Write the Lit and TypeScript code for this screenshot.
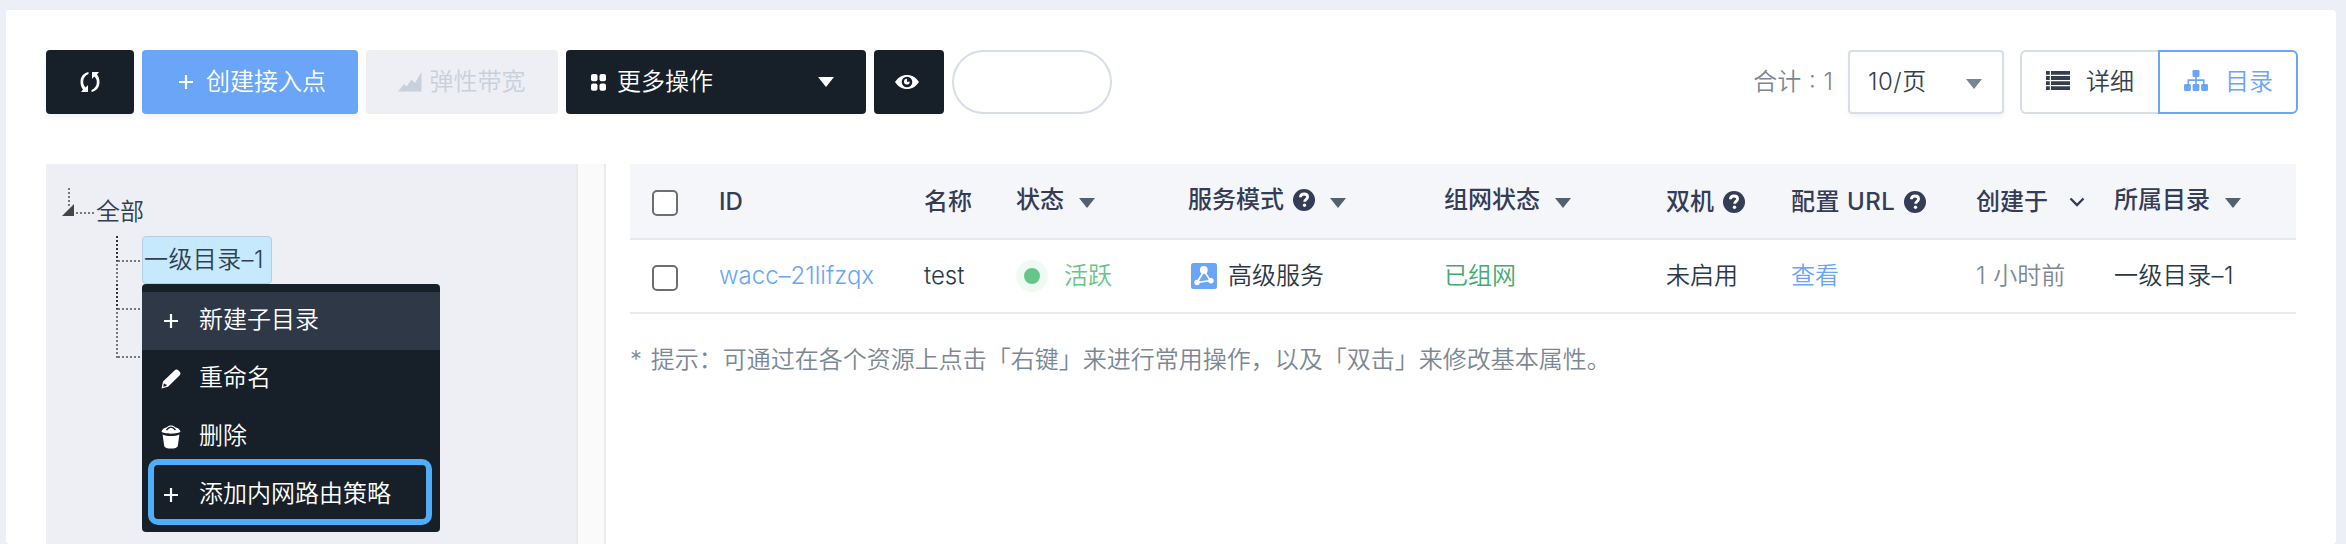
import { LitElement, html, svg, css } from "lit";
import { customElement, property } from "lit/decorators.js";

const GLYPHS: Record<string, { w: number; h: number; body: unknown }> = {
  refresh: { w: 20, h: 22, body: svg`<path d="M8.500 1C3.500 2 .5 5.500.5 11c0 3.200 1 5.600 2.500 7.500L1 21h7v-7l-2.300 2.500C4.400 15.300 3.200 13.400 3.200 11c0-3.800 1.800-6.500 5.300-8zM11.500 21c5-1 8-4.500 8-10 0-3.200-1-5.600-2.500-7.500L19 1h-7v7l2.300-2.500c1.300 1.200 2.500 3.100 2.500 5.500 0 3.800-1.800 6.500-5.300 8z"/>` },
  plus: { w: 14, h: 14, body: svg`<path d="M5.900 0h2.200v5.900H14v2.200H8.100V14H5.900V8.100H0V5.900h5.900z"/>` },
  area: { w: 24, h: 20, body: svg`<path d="M0 19.500L6 12 8.500 14.500 13.500 7.500l3.500 3.500L23.500 0V19.500z"/>` },
  grid: { w: 15, h: 17, body: svg`<rect width="6.500" height="7.200" rx="2"/><rect x="8.500" width="6.500" height="7.200" rx="2"/><rect y="9.500" width="6.500" height="7.200" rx="2"/><rect x="8.500" y="9.500" width="6.500" height="7.200" rx="2"/>` },
  eye: { w: 24, h: 14, body: svg`<path fill-rule="evenodd" d="M0 7C3 2.500 7 0 12 0s9 2.500 12 7c-3 4.500-7 7-12 7S3 11.500 0 7zM12 1.700a5.300 5.300 0 1 0 0 10.600 5.300 5.300 0 0 0 0-10.600zm0 2.100v3h2.800a2.900 2.900 0 1 1-2.800-3z"/>` },
  caret: { w: 16, h: 10, body: svg`<path d="M0 0h16L8 10z"/>` },
  list: { w: 24, h: 19, body: svg`<path d="M0 0h3.800v3.800H0zM5 0h19v3.800H5zM0 5.100h3.800v3.800H0zM5 5.100h19v3.800H5zM0 10.200h3.800V14H0zM5 10.200h19V14H5zM0 15.200h3.800V19H0zM5 15.200h19V19H5z"/>` },
  sitemap: { w: 24, h: 21, body: svg`<rect x="8.500" y="0" width="7" height="7" rx="1.300"/><rect x="0" y="14" width="6.800" height="7" rx="1.300"/><rect x="8.600" y="14" width="6.800" height="7" rx="1.300"/><rect x="17.200" y="14" width="6.800" height="7" rx="1.300"/><path d="M11.200 6h1.600v3.300H20.500v5.200h-1.600v-3.600h-6.100v3.600h-1.600v-3.600H5.100v3.600H3.500V9.300h7.700z"/>` },
  help: { w: 22, h: 22, body: svg`<circle cx="11" cy="11" r="11"/><path d="M7.400 8.300C7.500 6 9.100 5 11.100 5c2.100 0 3.500 1.100 3.500 2.900 0 2.400-3 2.500-3 4.900" fill="none" stroke="#fff" stroke-width="2.800"/><circle cx="11.500" cy="16.300" r="1.700" fill="#fff"/>` },
  chevron: { w: 16, h: 10, body: svg`<path d="M1.500 1.500L8 8l6.500-6.500" fill="none" stroke="currentColor" stroke-width="2.400"/>` },
  pencil: { w: 20, h: 20, body: svg`<path fill-rule="evenodd" d="M0.500 19.500L2 12.500 13.500 1.500Q15.500-0.300 17.500 1.500l1.200 1.200Q20.200 4.500 18.500 6.500L7 17.800zM2.900 14.300L2.200 17.700l3.200-.6.200-1.700-1.400-.1z"/>` },
  trash: { w: 20, h: 24, body: svg`<path d="M1.600 9.500C6 11.500 14 11.500 18.400 9.500L16.800 21c-.4 3.400-13.200 3.400-13.600 0zM.5 6.600C1 4 4 2.600 6 2.200 7.500-.2 12.500-.2 14 2.200c2 .4 5 1.800 5.500 4.400C18 9.400 2 9.400.5 6.600z"/><path d="M5.500 5Q10-.8 14.500 5" stroke="#171f28" fill="none" stroke-width="1.400"/>` },
  mesh: { w: 26, h: 26, body: svg`<rect width="26" height="26" rx="2.500"/><path d="M13 8L6 19.500 19.500 17.500z" fill="none" stroke="#fff" stroke-width="1.700"/><circle cx="12.800" cy="7" r="3.900" fill="#fff"/><circle cx="6" cy="19.500" r="2.700" fill="#fff"/><circle cx="20" cy="17.700" r="2.700" fill="#fff"/>` },
};

@customElement("ui-glyph")
class UiGlyph extends LitElement {
  static styles = css`:host{display:inline-flex;flex:none}svg{display:block;fill:currentColor}`;
  @property() name = "plus";
  render() {
    const g = GLYPHS[this.name];
    return html`<svg width=${g.w} height=${g.h} viewBox="0 0 ${g.w} ${g.h}">${g.body}</svg>`;
  }
}

@customElement("app-root")
class AppRoot extends LitElement {
  static styles = css`
    :host { display: block; height: 544px; overflow: hidden; background: #eceff5; box-sizing: border-box; padding: 10px 10px 0 6px; font: 24px/36px Inter, "Noto Sans CJK SC", sans-serif; font-weight: 350; color: #343f4e; }
    * { box-sizing: border-box; }
    .card { background: #fff; border-radius: 4px; height: 534px; padding: 40px 38px 0 40px; }
    .bar { display: flex; height: 64px; gap: 8px; }
    .btn { display: flex; align-items: center; justify-content: center; border-radius: 4px; background: #171f28; color: #fff; }
    .reload { width: 88px; box-shadow: 0 4px 6px #0000000d; }
    .create { width: 216px; background: #6aa5f8; gap: 13px; padding-left: 5px; box-shadow: 0 4px 6px #0000000d; }
    .flex { width: 192px; background: #eeeff5; color: #c8d1db; gap: 8px; padding-right: 1px; }
    .more { width: 300px; justify-content: flex-start; padding: 0 32px 0 25px; gap: 11px; }
    .more ui-glyph:last-child { margin-left: auto; }
    .eye { width: 70px; padding-right: 5px; }
    .pill { width: 160px; border: 2px solid #d7dee8; border-radius: 32px; }
    .total { margin-left: auto; margin-right: 7px; color: #7c8794; align-self: center; white-space: pre; word-spacing: 1px; }
    .size { width: 156px; border: 2px solid #d7dee8; border-radius: 4px; display: flex; align-items: center; justify-content: space-between; padding: 0 20px 0 18px; box-shadow: 0 3px 5px #0000000d; letter-spacing: .5px; }
    .size ui-glyph { color: #788490; padding-top: 4px; }
    .views { display: flex; margin-left: 8px; }
    .view { display: flex; align-items: center; border: 2px solid #d7dee8; gap: 16px; width: 138px; padding-left: 24px; border-radius: 6px 0 0 6px; border-right: 0; }
    .view ui-glyph { padding-bottom: 4px; }
    .view.on { width: 140px; border: 2px solid #6aa5f8; color: #6aa5f8; border-radius: 0 6px 6px 0; gap: 17px; }
    .body { display: flex; margin-top: 50px; height: 380px; }
    .side { width: 530px; flex: none; background: #eeeff5; padding-top: 24px; position: relative; color: #323f4f; }
    .node { display: flex; height: 48px; align-items: center; }
    .node svg { display: block; flex: none; }
    .label { height: 48px; line-height: 48px; padding-left: 2px; width: 130px; white-space: nowrap; }
    .label.sel { line-height: 46px; padding-left: 1px; letter-spacing: .4px; background: #c6e9fe; border: 1px solid #b4cedf; border-radius: 4px; }
    .menu { position: absolute; left: 96px; top: 120px; width: 298px; height: 248px; background: #171f28; border-radius: 4px; padding-top: 8px; color: #fff; }
    .item { display: grid; grid-template-columns: 57px 1fr; align-items: center; height: 58px; padding-bottom: 2px; }
    .item ui-glyph { justify-self: center; padding-top: 1px; }
    .item.hot { background: #2e3847; }
    .mark { position: absolute; left: 6px; top: 175px; width: 284px; height: 66px; border: 6px solid #50adf7; border-radius: 10px; }
    .split { width: 30px; flex: none; background: #fafafa; border: 2px solid #e8e9ec; border-width: 0 2px; border-right-color: #ebebed; }
    .main { flex: 1; padding-left: 24px; }
    .row { display: grid; grid-template-columns: 89px 205px 92px 172px 256px 222px 125px 185px 138px 1fr; border-bottom: 2px solid #e5e9ef; width: 1666px; height: 74px; align-items: center; color: #2b3847; white-space: nowrap; }
    .head { background: #f5f6fa; height: 76px; font-weight: 500; color: #343c56; }
    .head .cell { padding-top: 2px; }
    .cell { display: flex; align-items: center; }
    .head .up { padding: 0 0 2px; }
    .box { width: 26px; height: 26px; border: 2px solid #6e6e6e; border-radius: 5px; background: #fff; margin-left: 22px; margin-top: 4px; }
    .caret { color: #52606f; margin: 5px 0 0 15px; }
    .help { margin-left: 9px; }
    .url { letter-spacing: .5px; }
    .chev { margin-left: 21px; }
    .blue { color: #6aa5f8; }
    .green { color: #66c688; }
    .joined { color: #45aa70; }
    .gray { color: #7c8794; word-spacing: 1px; }
    .folder { letter-spacing: .4px; }
    .dot { width: 32px; height: 32px; border: 8px solid #effaf3; border-radius: 50%; background: #66c688; margin-right: 16px; }
    .mesh { color: #6aa5f8; margin: 0 11px 0 3px; }
    .tip { color: #7c8794; margin-top: 28px; white-space: nowrap; word-spacing: 2px; }
  `;

  head(text: string, opts: { help?: boolean; caret?: boolean; chev?: boolean; url?: boolean } = {}) {
    return html`<div class="cell ${opts.caret ? "up" : ""} ${opts.url ? "url" : ""}">${text}
      ${opts.help ? html`<ui-glyph class="help" name="help"></ui-glyph>` : ""}${opts.caret ? html`<ui-glyph class="caret" name="caret"></ui-glyph>` : ""}${opts.chev ? html`<ui-glyph class="chev" name="chevron"></ui-glyph>` : ""}</div>`;
  }

  branch(last = false) {
    return html`<svg width="96" height="48"><g fill="none" stroke-width="2" stroke-dasharray="2 2"><path d="M71 0V${last ? 26 : 48}M72 25H96" stroke="#777"/>${last ? "" : svg`<path d="M71 0V25" stroke="#333"/>`}</g></svg>`;
  }

  render() {
    const items = [["plus", "新建子目录"], ["pencil", "重命名"], ["trash", "删除"], ["plus", "添加内网路由策略"]];
    return html`<div class="card">
      <div class="bar">
        <div class="btn reload"><ui-glyph name="refresh"></ui-glyph></div>
        <div class="btn create"><ui-glyph name="plus"></ui-glyph>创建接入点</div>
        <div class="btn flex"><ui-glyph name="area"></ui-glyph>弹性带宽</div>
        <div class="btn more"><ui-glyph name="grid"></ui-glyph>更多操作<ui-glyph name="caret"></ui-glyph></div>
        <div class="btn eye"><ui-glyph name="eye"></ui-glyph></div>
        <div class="pill"></div>
        <div class="total">合计 : 1</div>
        <div class="size">10/页<ui-glyph name="caret"></ui-glyph></div>
        <div class="views">
          <div class="view"><ui-glyph name="list"></ui-glyph>详细</div>
          <div class="view on"><ui-glyph name="sitemap"></ui-glyph>目录</div>
        </div>
      </div>
      <div class="body">
        <div class="side">
          <div class="node"><svg width="48" height="48"><path d="M23 0V18M30 25H48" fill="none" stroke="#777" stroke-width="2" stroke-dasharray="2 2"/><path d="M28 16V28H16z" fill="#444"/></svg><div class="label">全部</div></div>
          <div class="node">${this.branch()}<div class="label sel">一级目录–1</div></div>
          <div class="node">${this.branch()}</div>
          <div class="node">${this.branch(true)}</div>
          <div class="menu">
            ${items.map(([icon, text], i) => html`<div class="item ${i === 0 ? "hot" : ""}"><ui-glyph name=${icon}></ui-glyph>${text}</div>`)}
            <div class="mark"></div>
          </div>
        </div>
        <div class="split"></div>
        <div class="main">
          <div class="row head">
            <div class="box"></div>${this.head("ID")}${this.head("名称")}${this.head("状态", { caret: true })}${this.head("服务模式", { help: true, caret: true })}${this.head("组网状态", { caret: true })}${this.head("双机", { help: true })}${this.head("配置 URL", { help: true, url: true })}${this.head("创建于", { chev: true })}${this.head("所属目录", { caret: true })}
          </div>
          <div class="row">
            <div class="box"></div>
            <div class="blue">wacc–21lifzqx</div>
            <div>test</div>
            <div class="cell green"><span class="dot"></span>活跃</div>
            <div class="cell"><ui-glyph class="mesh" name="mesh"></ui-glyph>高级服务</div>
            <div class="joined">已组网</div>
            <div>未启用</div>
            <div class="blue">查看</div>
            <div class="gray">1 小时前</div>
            <div class="folder">一级目录–1</div>
          </div>
          <div class="tip">* 提示：可通过在各个资源上点击「右键」来进行常用操作，以及「双击」来修改基本属性。</div>
        </div>
      </div>
    </div>`;
  }
}
